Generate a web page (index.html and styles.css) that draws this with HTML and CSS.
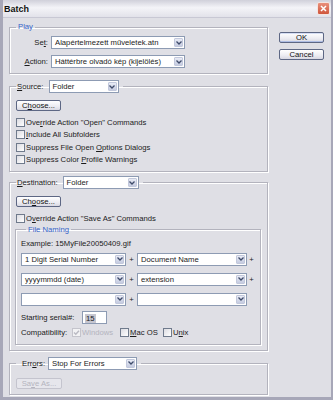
FILE: index.html
```html
<!DOCTYPE html>
<html lang="en">
<head>
    <meta charset="UTF-8">
    <meta name="viewport" content="width=device-width, initial-scale=1.0">
    <title>Batch</title>
    <link rel="stylesheet" href="styles.css">
</head>
<body>
    <div class="window">
        <div class="titlebar">
            <span class="title">Batch</span>
            <span class="close">
                <svg width="7" height="7" viewBox="0 0 7 7"><path d="M1 1L6 6M6 1L1 6" stroke="#fff" stroke-width="1.5"/></svg>
            </span>
        </div>

        <div class="dialog">
            <div class="main">

                <!-- Play -->
                <fieldset class="group play">
                    <legend class="caption">Play</legend>
                    <div class="field">
                        <span class="field-label">Se<u>t</u>:</span>
                        <div class="select set-select">
                            <span class="value">Alapértelmezett műveletek.atn</span>
                            <span class="arrow"><svg width="6" height="4" viewBox="0 0 6 4"><path d="M0.5 0.5L3 3L5.5 0.5" fill="none" stroke="#3e4b6a" stroke-width="1.3"/></svg></span>
                        </div>
                    </div>
                    <div class="field">
                        <span class="field-label"><u>A</u>ction:</span>
                        <div class="select set-select">
                            <span class="value">Háttérbre olvadó kép (kijelölés)</span>
                            <span class="arrow"><svg width="6" height="4" viewBox="0 0 6 4"><path d="M0.5 0.5L3 3L5.5 0.5" fill="none" stroke="#3e4b6a" stroke-width="1.3"/></svg></span>
                        </div>
                    </div>
                </fieldset>

                <!-- Source -->
                <fieldset class="group source">
                    <legend class="header">
                        <span class="header-label"><u>S</u>ource:</span>
                        <div class="select source-select">
                            <span class="value">Folder</span>
                            <span class="arrow"><svg width="6" height="4" viewBox="0 0 6 4"><path d="M0.5 0.5L3 3L5.5 0.5" fill="none" stroke="#3e4b6a" stroke-width="1.3"/></svg></span>
                        </div>
                    </legend>
                    <button class="btn choose">C<u>h</u>oose...</button>
                    <div class="check-row"><span class="check"></span><span>Ove<u>r</u>ride Action "Open" Commands</span></div>
                    <div class="check-row"><span class="check"></span><span><u>I</u>nclude All Subfolders</span></div>
                    <div class="check-row"><span class="check"></span><span>Suppress File Open <u>O</u>ptions Dialogs</span></div>
                    <div class="check-row"><span class="check"></span><span>Suppress Color <u>P</u>rofile Warnings</span></div>
                </fieldset>

                <!-- Destination -->
                <fieldset class="group destination">
                    <legend class="header">
                        <span class="header-label"><u>D</u>estination:</span>
                        <div class="select dest-select">
                            <span class="value">Folder</span>
                            <span class="arrow"><svg width="6" height="4" viewBox="0 0 6 4"><path d="M0.5 0.5L3 3L5.5 0.5" fill="none" stroke="#3e4b6a" stroke-width="1.3"/></svg></span>
                        </div>
                    </legend>
                    <button class="btn choose">Ch<u>o</u>ose...</button>
                    <div class="check-row"><span class="check"></span><span>O<u>v</u>erride Action "Save As" Commands</span></div>

                    <fieldset class="group naming">
                        <legend class="caption">File Naming</legend>
                        <div class="example">Example: 15MyFile20050409.gif</div>
                        <div class="name-rows">
                            <div class="name-row">
                                <div class="select name-left">
                                    <span class="value">1 Digit Serial Number</span>
                                    <span class="arrow"><svg width="6" height="4" viewBox="0 0 6 4"><path d="M0.5 0.5L3 3L5.5 0.5" fill="none" stroke="#3e4b6a" stroke-width="1.3"/></svg></span>
                                </div>
                                <span class="plus">+</span>
                                <div class="select name-right">
                                    <span class="value">Document Name</span>
                                    <span class="arrow"><svg width="6" height="4" viewBox="0 0 6 4"><path d="M0.5 0.5L3 3L5.5 0.5" fill="none" stroke="#3e4b6a" stroke-width="1.3"/></svg></span>
                                </div>
                                <span class="plus">+</span>
                            </div>
                            <div class="name-row">
                                <div class="select name-left">
                                    <span class="value">yyyymmdd (date)</span>
                                    <span class="arrow"><svg width="6" height="4" viewBox="0 0 6 4"><path d="M0.5 0.5L3 3L5.5 0.5" fill="none" stroke="#3e4b6a" stroke-width="1.3"/></svg></span>
                                </div>
                                <span class="plus">+</span>
                                <div class="select name-right">
                                    <span class="value">extension</span>
                                    <span class="arrow"><svg width="6" height="4" viewBox="0 0 6 4"><path d="M0.5 0.5L3 3L5.5 0.5" fill="none" stroke="#3e4b6a" stroke-width="1.3"/></svg></span>
                                </div>
                                <span class="plus">+</span>
                            </div>
                            <div class="name-row">
                                <div class="select name-left">
                                    <span class="value"></span>
                                    <span class="arrow"><svg width="6" height="4" viewBox="0 0 6 4"><path d="M0.5 0.5L3 3L5.5 0.5" fill="none" stroke="#3e4b6a" stroke-width="1.3"/></svg></span>
                                </div>
                                <span class="plus">+</span>
                                <div class="select name-right">
                                    <span class="value"></span>
                                    <span class="arrow"><svg width="6" height="4" viewBox="0 0 6 4"><path d="M0.5 0.5L3 3L5.5 0.5" fill="none" stroke="#3e4b6a" stroke-width="1.3"/></svg></span>
                                </div>
                            </div>
                        </div>
                        <div class="serial-row">
                            <span class="serial-label">Starting serial#:</span>
                            <span class="input"><span class="selected">15</span></span>
                        </div>
                        <div class="compat-row">
                            <span class="compat-label">Compatibility:</span>
                            <span class="opt opt-win disabled">
                                <span class="check checked">
                                    <svg width="7" height="7" viewBox="0 0 7 7"><path d="M1 3.5L2.8 5.3L6 1.8" fill="none" stroke="#b9b9c2" stroke-width="1.4"/></svg>
                                </span><span>Windows</span>
                            </span>
                            <span class="opt opt-mac"><span class="check"></span><span><u>M</u>ac OS</span></span>
                            <span class="opt"><span class="check"></span><span>U<u>n</u>ix</span></span>
                        </div>
                    </fieldset>
                </fieldset>

                <!-- Errors -->
                <fieldset class="group errors">
                    <legend class="header">
                        <span class="header-label errors-label">Err<u>o</u>rs:</span>
                        <div class="select errors-select">
                            <span class="value">Stop For Errors</span>
                            <span class="arrow"><svg width="6" height="4" viewBox="0 0 6 4"><path d="M0.5 0.5L3 3L5.5 0.5" fill="none" stroke="#3e4b6a" stroke-width="1.3"/></svg></span>
                        </div>
                    </legend>
                    <button class="btn save-as" disabled>Sa<u>v</u>e As...</button>
                </fieldset>
            </div>

            <div class="actions">
                <button class="btn default">OK</button>
                <button class="btn">Cancel</button>
            </div>
        </div>
    </div>
</body>
</html>
```

FILE: styles.css
```css
* {
    box-sizing: border-box;
}
body {
    margin: 0;
    font-family: "Liberation Sans", Arial, sans-serif;
    font-size: 7.7px;
    color: #1b1b1b;
    background-color: #dfdfe5;
}
u {
    text-underline-offset: 1px;
}
.window {
    width: 333px;
    height: 400px;
    display: flex;
    flex-direction: column;
    background-color: #dfdfe5;
    border-left: 3px solid #a7a7b8;
    border-right: 2px solid #a7a7b8;
    border-bottom: 3px solid #a7a7b8;
}
.titlebar {
    height: 18px;
    flex: none;
    display: flex;
    align-items: center;
    justify-content: space-between;
    padding: 0 1px 0 1px;
    background: linear-gradient(#d0d0da, #f4f4f8 45%, #e2e2ea);
    border-bottom: 1px solid #c8c8d4;
}
.title {
    font-weight: bold;
    font-size: 9px;
    color: #111;
}
.close {
    width: 13px;
    height: 13px;
    display: flex;
    align-items: center;
    justify-content: center;
    border: 1px solid #f4e4e0;
    border-radius: 2px;
    background: linear-gradient(#e9907c, #cf553b);
}
.dialog {
    display: flex;
    padding: 5px 0 0 6px;
}
.main {
    width: 259px;
    display: flex;
    flex-direction: column;
}
.actions {
    margin-left: 11px;
    padding-top: 9px;
    display: flex;
    flex-direction: column;
    gap: 6px;
}

/* group boxes */
.group {
    margin: 0;
    min-width: 0;
    border: 1px solid #b3b3bd;
    box-shadow: inset 1px 1px 0 #fff, 1px 1px 0 #fff;
    padding: 0 1px 5px 6px;
}
.caption {
    padding: 0 2px;
    line-height: 8px;
    color: #3563c8;
}
.header {
    padding: 0 4px 0 1px;
    display: flex;
    align-items: center;
}
.play {
    padding-top: 5px;
}
.source {
    margin-top: 6px;
    padding-top: 7px;
}
.destination {
    margin-top: 4px;
    padding-top: 7px;
}
.errors {
    margin-top: 6px;
    padding-top: 8px;
}
.naming {
    margin: 1px 0 0 -1px;
    width: 246px;
    padding: 5px 1px 5px 5px;
}
.naming .caption {
    margin-left: 5px;
}

/* fields */
.field {
    display: flex;
    align-items: center;
    height: 13px;
}
.field + .field {
    margin-top: 6px;
}
.field-label {
    width: 32px;
    margin-right: 3px;
    text-align: right;
    white-space: nowrap;
}
.header-label {
    margin-right: 5px;
    white-space: nowrap;
}
.errors-label {
    margin-left: 5px;
    margin-right: 3px;
}
.select {
    height: 13px;
    display: flex;
    align-items: center;
    background-color: #fff;
    border: 1px solid #8d9bb3;
    padding-right: 1px;
}
.value {
    flex: 1;
    padding-left: 3px;
    white-space: nowrap;
    overflow: hidden;
}
.arrow {
    width: 9px;
    height: 9px;
    display: flex;
    align-items: center;
    justify-content: center;
    border: 1px solid #c2c8dc;
    border-radius: 1px;
    background: linear-gradient(#e8ebf5, #c5cbe0);
}
.set-select {
    width: 134px;
}
.source-select {
    width: 70px;
}
.dest-select {
    width: 76px;
}
.errors-select {
    width: 89px;
}

/* buttons */
.btn {
    display: block;
    width: 45px;
    height: 11px;
    padding: 0;
    font-family: inherit;
    font-size: 7.7px;
    line-height: 9px;
    color: #111;
    border: 1px solid #5d6784;
    border-radius: 2px;
    background: linear-gradient(#ffffff, #ececf2 60%, #d8d8e2);
}
.btn.default {
    box-shadow: inset 0 -1px 0 #aebde4, inset 0 1px 0 #d6def4;
}
.btn:disabled {
    color: #b4b4be;
    border-color: #c4c4ce;
    background: #e6e6ec;
}
.choose {
    margin-bottom: 5px;
}
.save-as {
    width: 46px;
}

/* checkboxes */
.check-row {
    display: flex;
    align-items: center;
    height: 12.5px;
    white-space: nowrap;
}
.check {
    width: 9px;
    height: 9px;
    flex: none;
    margin-right: 1px;
    display: flex;
    align-items: center;
    justify-content: center;
    border: 1px solid #6f7a8c;
    background: linear-gradient(135deg, #dcdce2, #ffffff);
}
.check.checked {
    border-color: #c4c4cc;
    background: #f2f2f4;
}

/* file naming */
.example {
    line-height: 10px;
}
.name-rows {
    margin-top: 4px;
    display: flex;
    flex-direction: column;
    gap: 7px;
}
.name-row {
    display: flex;
    align-items: center;
}
.name-left {
    width: 105px;
}
.name-right {
    width: 110px;
}
.plus {
    width: 11px;
    text-align: center;
}
.name-right + .plus {
    width: 9px;
}
.serial-row {
    margin-top: 5px;
    display: flex;
    align-items: center;
}
.serial-label {
    width: 61px;
}
.input {
    width: 25px;
    height: 13px;
    padding: 2px 0 0 2px;
    background-color: #fff;
    border: 1px solid #8d9bb3;
}
.selected {
    background-color: #c6c6d0;
    padding: 0 1px;
}
.compat-row {
    margin-top: 3px;
    height: 12px;
    display: flex;
    align-items: center;
}
.compat-label {
    width: 51px;
}
.opt {
    display: flex;
    align-items: center;
    white-space: nowrap;
}
.opt-win {
    width: 48px;
}
.opt-mac {
    width: 43px;
}
.disabled {
    color: #b4b4be;
}
```
